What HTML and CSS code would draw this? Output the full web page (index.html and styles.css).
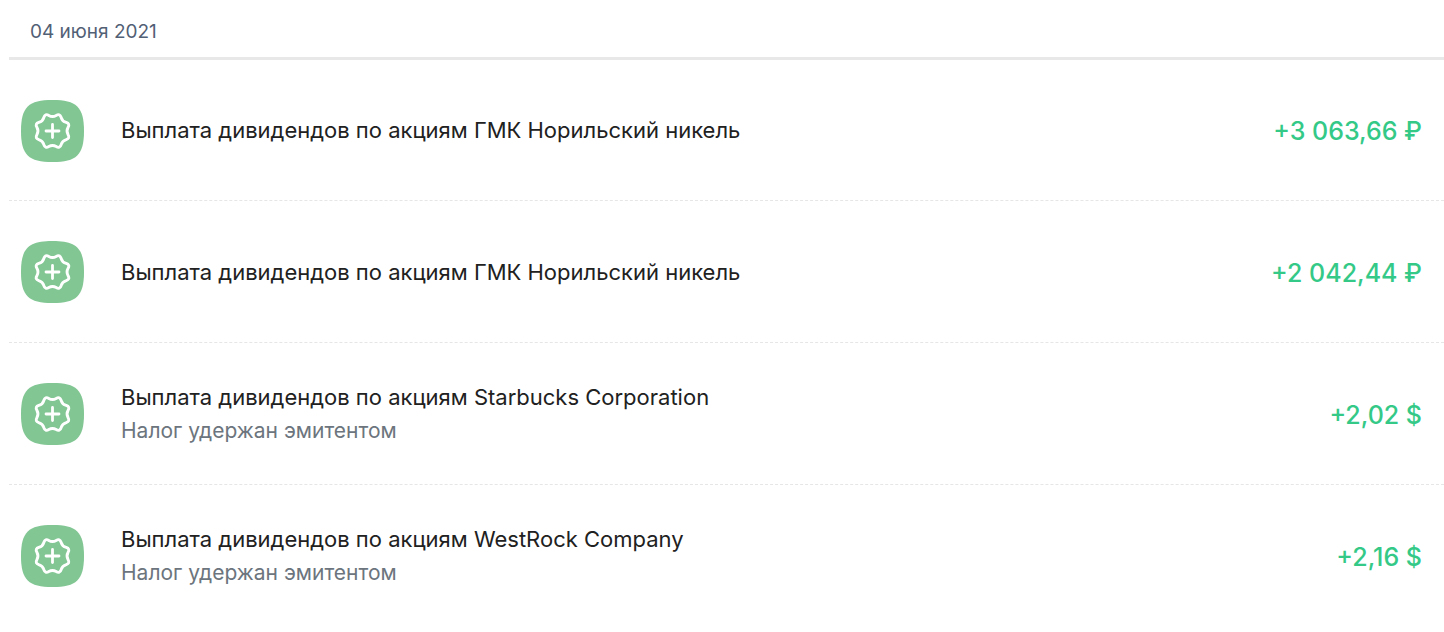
FILE: index.html
```html
<!DOCTYPE html>
<html lang="ru">
<head>
  <meta charset="UTF-8">
  <meta name="viewport" content="width=device-width, initial-scale=1.0">
  <title>Операции</title>
  <link rel="stylesheet" href="styles.css">
</head>
<body>
  <svg class="sprite" aria-hidden="true">
    <symbol id="dividend" viewBox="-31.5 -32 63 63">
      <path fill="#81c693" d="M0 -31C24 -31 31.500 -24 31.500 0S24 31 0 31S-31.500 24 -31.500 0S-24 -31 0 -31Z"/>
      <path fill="none" stroke="#fff" stroke-width="2.900" stroke-linejoin="round" d="M15.600 3.700Q17.700 7.300 13.700 8.600Q9.700 9.700 8.600 13.700Q7.300 17.700 3.700 15.600Q0 13.500 -3.700 15.600Q-7.300 17.700 -8.600 13.700Q-9.700 9.700 -13.700 8.600Q-17.700 7.300 -15.600 3.700Q-13.500 0 -15.600 -3.700Q-17.700 -7.300 -13.700 -8.600Q-9.700 -9.700 -8.600 -13.700Q-7.300 -17.700 -3.700 -15.600Q0 -13.500 3.700 -15.600Q7.300 -17.700 8.600 -13.700Q9.700 -9.700 13.700 -8.600Q17.700 -7.300 15.600 -3.700Q13.500 0 15.600 3.700Z"/>
      <path fill="none" stroke="#fff" stroke-width="2.800" stroke-linecap="round" d="M-6.500 0H6.500M0 -6.500V6.500"/>
    </symbol>
  </svg>

  <section class="operations">
    <h2 class="date">04 июня 2021</h2>
    <ul class="list">
      <li class="operation">
        <svg class="icon" aria-hidden="true"><use href="#dividend"/></svg>
        <div class="info">
          <p class="title">Выплата дивидендов по акциям ГМК Норильский никель</p>
        </div>
        <span class="amount">+3 063,66 ₽</span>
      </li>
      <li class="operation">
        <svg class="icon" aria-hidden="true"><use href="#dividend"/></svg>
        <div class="info">
          <p class="title">Выплата дивидендов по акциям ГМК Норильский никель</p>
        </div>
        <span class="amount">+2 042,44 ₽</span>
      </li>
      <li class="operation">
        <svg class="icon" aria-hidden="true"><use href="#dividend"/></svg>
        <div class="info">
          <p class="title">Выплата дивидендов по акциям Starbucks Corporation</p>
          <p class="note">Налог удержан эмитентом</p>
        </div>
        <span class="amount">+2,02 $</span>
      </li>
      <li class="operation">
        <svg class="icon" aria-hidden="true"><use href="#dividend"/></svg>
        <div class="info">
          <p class="title">Выплата дивидендов по акциям WestRock Company</p>
          <p class="note">Налог удержан эмитентом</p>
        </div>
        <span class="amount">+2,16 $</span>
      </li>
    </ul>
  </section>
</body>
</html>
```
FILE: styles.css
```css
body {
  margin: 0;
  background-color: #fff;
  font-family: Inter, "Noto Sans", sans-serif;
  color: #212121;
}

.sprite {
  display: none;
}

.operations {
  padding-left: 9px;
}

.date {
  margin: 0;
  padding: 18px 21px 12px;
  border-bottom: 3px solid #e8e8e8;
  font-size: 19px;
  font-weight: 400;
  line-height: 27px;
  color: #526075;
}

.list {
  margin: 0;
  padding: 0;
  list-style: none;
}

.operation {
  display: flex;
  align-items: center;
  min-height: 141px;
  padding: 0 22px 0 12px;
  border-bottom: 1px dashed #e6e6e6;
}

.operation:first-child {
  min-height: 140px;
}

.operation:last-child {
  border-bottom: none;
}

.icon {
  flex: none;
  width: 63px;
  height: 63px;
  margin-right: 37px;
}

.info {
  flex: 1;
}

.title,
.note {
  margin: 0;
  font-size: 22px;
  line-height: 34px;
}

.note {
  font-size: 21px;
  color: #6c757d;
}

.amount {
  padding-top: 2px;
  font-size: 25px;
  font-weight: 500;
  line-height: 34px;
  color: #34c987;
  white-space: nowrap;
}
```
